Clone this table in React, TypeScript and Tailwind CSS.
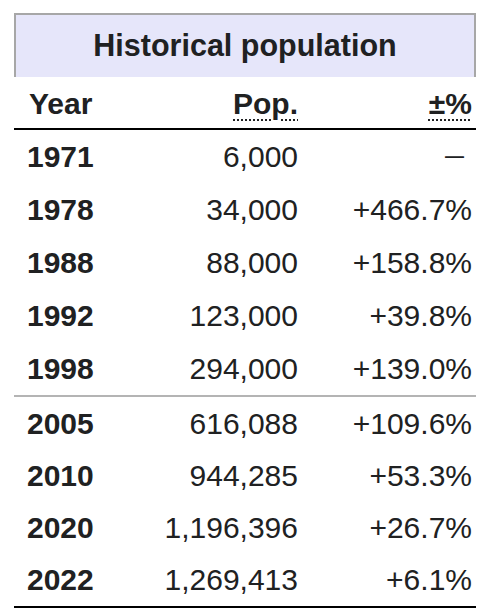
import React from "react";

const rows1 = [
  ["1971", "6,000", "—"],
  ["1978", "34,000", "+466.7%"],
  ["1988", "88,000", "+158.8%"],
  ["1992", "123,000", "+39.8%"],
  ["1998", "294,000", "+139.0%"],
];
const rows2 = [
  ["2005", "616,088", "+109.6%"],
  ["2010", "944,285", "+53.3%"],
  ["2020", "1,196,396", "+26.7%"],
  ["2022", "1,269,413", "+6.1%"],
];

function Row({ r, h }: { r: string[]; h: string }) {
  return (
    <div className={`flex items-center pt-[1px] ${h}`}>
      <div className="w-[130px] pl-[13px] font-bold">{r[0]}</div>
      <div className="w-[154px] text-right">{r[1]}</div>
      {r[2] === "—" ? (
        <div className="flex-1 text-right pr-[12px] text-[19px] font-bold pb-[3px]">{r[2]}</div>
      ) : (
        <div className="flex-1 text-right pr-[4px]">{r[2]}</div>
      )}
    </div>
  );
}

export default function App() {
  return (
    <div className="w-[482px] h-[610px] bg-white pt-[13px] pl-[14px]" style={{ fontFamily: '"Liberation Sans", Arial, sans-serif' }}>
      <div className="w-[462px] text-[#202122] text-[30px] leading-none">
        <div className="h-[64px] bg-[#e6e6fa] border-t-2 border-l-2 border-r-2 border-[#a7a7a7] flex items-center justify-center font-bold text-[30.5px] pb-[1px]">
          Historical population
        </div>
        <div className="flex items-center h-[51px] font-bold pt-[3px]">
          <div className="w-[130px] pl-[15px]">Year</div>
          <div className="w-[154px] text-right">
            <span className="underline decoration-dotted decoration-2 underline-offset-[5px]">Pop.</span>
          </div>
          <div className="flex-1 text-right pr-[4px]">
            <span className="underline decoration-dotted decoration-2 underline-offset-[5px]">±%</span>
          </div>
        </div>
        <div className="h-[2px] bg-black" />
        {rows1.map((r) => (
          <Row key={r[0]} r={r} h="h-[53px]" />
        ))}
        <div className="h-[2px] bg-[#b4b4b4]" />
        {rows2.map((r) => (
          <Row key={r[0]} r={r} h="h-[52.25px]" />
        ))}
        <div className="h-[2px] bg-black" />
      </div>
    </div>
  );
}
